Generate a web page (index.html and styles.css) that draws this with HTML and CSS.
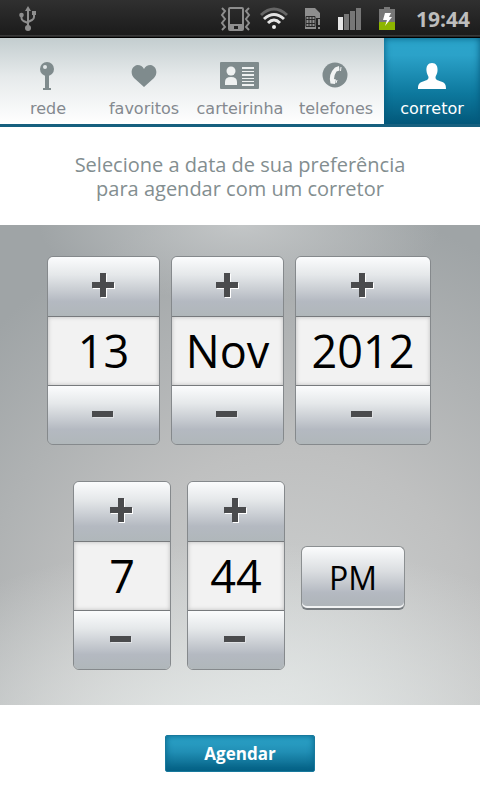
FILE: index.html
```html
<!DOCTYPE html>
<html lang="pt-BR">
<head>
<meta charset="utf-8">
<meta name="viewport" content="width=device-width, initial-scale=1">
<title>Corretor</title>
<link rel="stylesheet" href="styles.css">
</head>
<body>
<svg class="defs" aria-hidden="true">
  <symbol id="plus" viewBox="0 0 24 26">
    <path d="M9 1h6v9h8v6h-8v9H9v-9H1v-6h8z" fill="#fff"/>
    <path d="M8 0h6v9h8v6h-8v9H8v-9H0V9h8z" fill="#4a4b4d"/>
  </symbol>
  <symbol id="minus" viewBox="0 0 24 8">
    <path d="M1 1h21v6H1z" fill="#dfe1e4"/>
    <path d="M0 0h21v6H0z" fill="#4a4b4d"/>
  </symbol>
</svg>
<header class="status">
  <svg class="usb" width="18" height="26" viewBox="0 0 18 26" fill="none" stroke="#8e8e8e" stroke-width="2">
    <path d="M9 3v18M2.500 8v4q0 2 2 3l4.500 2M15 7v4q0 2-2 3l-4 2"/>
    <circle cx="9" cy="22" r="3" fill="#8e8e8e" stroke="none"/>
    <path d="M9 0l3 5H6zM13 5h4v4h-4z" fill="#8e8e8e" stroke="none"/>
    <circle cx="2.500" cy="9" r="2.300" fill="#8e8e8e" stroke="none"/>
  </svg>
  <div class="indicators">
    <svg width="32" height="24" viewBox="0 0 32 24" fill="none" stroke="#8e8e8e">
      <path fill="#8e8e8e" stroke="none" fill-rule="evenodd" d="M10 0h12q2 0 2 2v20q0 2-2 2H10q-2 0-2-2V2q0-2 2-2zM10 2v15h12V2zM14 19v3h4v-3z"/>
      <path stroke-width="2" d="M2 1l3 3-3 4 3 4-3 4 3 4-3 3M29 1l-3 3 3 4-3 4 3 4-3 4 3 3"/>
    </svg>
    <svg width="28" height="24" viewBox="0 0 28 24" fill="none" stroke-width="3">
      <path stroke="#666" d="M1 8q13-12 26 0"/>
      <path stroke="#e3e3e3" d="M4 12q10-9 20 0M8 16q6-6 12 0"/>
      <circle cx="14" cy="20" r="2" fill="#eee"/>
    </svg>
    <svg width="18" height="22" viewBox="0 0 18 22">
      <path fill="#8e8e8e" d="M1 0h10l5 5v5h-4v11H1z"/>
      <path fill="none" stroke="#292929" d="M2 8.500h9v10H2zM2 11.500h9M2 15.500h9M5 8.500v10M8 8.500v10"/>
      <path fill="#8e8e8e" d="M14 11h2v6h-2zM14 19h2v2h-2z"/>
    </svg>
    <svg width="24" height="22" viewBox="0 0 24 22">
      <path fill="#e6e6e6" d="M0 9h5v13H0z"/>
      <path fill="#777" d="M6 6h5v16H6zM12 3h5v19h-5zM18 0h5v22h-5z"/>
    </svg>
    <svg width="18" height="24" viewBox="0 0 18 24">
      <path fill="#777" d="M6 0h6v2h5v14H1V2h5z"/>
      <path fill="#8db500" d="M1 15h16v8H1z"/>
      <path fill="#fff" d="M7 6h6l-2 4h3l-7 9 2-6H5z"/>
    </svg>
    <time class="clock">19:44</time>
  </div>
</header>
<nav class="tabs">
  <a class="tab" href="#rede">
    <svg width="16" height="28" viewBox="0 0 16 28"><circle cx="7" cy="7" r="7" fill="#7f8b8d"/><circle cx="5" cy="5" r="2" fill="#e2e7e8"/><path d="M5 13h4v13h2v2H3v-2h2z" fill="#7f8b8d"/></svg>
    <span>rede</span>
  </a>
  <a class="tab" href="#favoritos">
    <svg width="26" height="25" viewBox="0 0 26 25"><path fill="#7f8b8d" d="M13 22L3 13C-1 9 0 1 6.500 0Q11 0 13 4 15 0 19.500 0C26 1 27 9 23 13z"/></svg>
    <span>favoritos</span>
  </a>
  <a class="tab" href="#carteirinha">
    <svg width="40" height="28" viewBox="0 0 40 28"><rect width="39" height="27" rx="1" fill="#7f8b8d"/><circle cx="11" cy="9" r="4.500" fill="#eef1f1"/><path fill="#eef1f1" d="M5 23v-3q0-5 6-5t6 5v3zM22 5h12v2H22zM22 9h12v1H22zM22 12h12v2H22zM22 16h12v1H22zM22 19h12v1H22zM22 22h12v2H22z"/></svg>
    <span>carteirinha</span>
  </a>
  <a class="tab" href="#telefones">
    <svg width="28" height="28" viewBox="0 0 28 28"><circle cx="13" cy="13" r="12.500" fill="#7f8b8d"/><path fill="#f2f4f4" d="M13 5.500l4-1.500.5 4.500-3 1q-2.500 3.500-2.500 7.500l2 .5-1 4.500-4.500-.5Q6 12 13 5.500z"/><path fill="none" stroke="#f2f4f4" d="M19 5l-.5 4M15 18l-1 3"/></svg>
    <span>telefones</span>
  </a>
  <a class="tab active" href="#corretor" aria-current="page">
    <svg width="30" height="27" viewBox="0 0 30 27"><path fill="#fff" d="M15 0c4 0 6 3 5.500 8-.3 3-1.500 4-2 6 0 3 1.500 3 5.500 4.500 4 1 5 3 5 7.500H1c0-4.500 1-6.500 5-7.500 4-1.500 5.500-1.500 5.500-4.500-.5-2-1.700-3-2-6C9 3 11 0 15 0z"/></svg>
    <span>corretor</span>
  </a>
</nav>
<main>
  <p class="prompt">Selecione a data de sua preferência<br>para agendar com um corretor</p>
  <form id="schedule" class="panel">
    <div class="row">
      <div class="stepper">
        <button type="button" aria-label="Aumentar dia"><svg width="24" height="26"><use href="#plus"/></svg></button>
        <input type="text" aria-label="Dia" value="13">
        <button type="button" aria-label="Diminuir dia"><svg width="24" height="8"><use href="#minus"/></svg></button>
      </div>
      <div class="stepper">
        <button type="button" aria-label="Próximo mês"><svg width="24" height="26"><use href="#plus"/></svg></button>
        <input type="text" aria-label="Mês" value="Nov">
        <button type="button" aria-label="Mês anterior"><svg width="24" height="8"><use href="#minus"/></svg></button>
      </div>
      <div class="stepper wide">
        <button type="button" aria-label="Aumentar ano"><svg width="24" height="26"><use href="#plus"/></svg></button>
        <input type="text" aria-label="Ano" value="2012">
        <button type="button" aria-label="Diminuir ano"><svg width="24" height="8"><use href="#minus"/></svg></button>
      </div>
    </div>
    <div class="row time">
      <div class="stepper narrow">
        <button type="button" aria-label="Aumentar hora"><svg width="24" height="26"><use href="#plus"/></svg></button>
        <input type="text" aria-label="Hora" value="7">
        <button type="button" aria-label="Diminuir hora"><svg width="24" height="8"><use href="#minus"/></svg></button>
      </div>
      <div class="stepper narrow">
        <button type="button" aria-label="Aumentar minutos"><svg width="24" height="26"><use href="#plus"/></svg></button>
        <input type="text" aria-label="Minutos" value="44">
        <button type="button" aria-label="Diminuir minutos"><svg width="24" height="8"><use href="#minus"/></svg></button>
      </div>
      <button class="period" type="button">PM</button>
    </div>
  </form>
  <div class="actions"><button class="submit" type="submit" form="schedule">Agendar</button></div>
</main>
</body>
</html>
```
FILE: styles.css
```css
* { box-sizing: border-box; }
body {
  margin: 0;
  background: #fff;
  font-family: "Open Sans", "Noto Sans", sans-serif;
}
button, input { font: inherit; margin: 0; padding: 0; }
svg { display: block; flex: none; }
.defs { position: absolute; width: 0; height: 0; }

.status {
  display: flex;
  align-items: center;
  justify-content: space-between;
  height: 38px;
  padding: 0 10px 0 19px;
  background: linear-gradient(#303030, #1b1b1b 35px, #555 36px, #000 37px);
}
.indicators { display: flex; align-items: center; gap: 16px; }
.indicators svg:first-child { margin-right: -8px; }
.clock {
  margin-left: 4px;
  color: #bdbdbd;
  font-size: 21px;
  font-weight: 700;
  line-height: 36px;
}

.tabs {
  display: grid;
  grid-template-columns: repeat(5, 1fr);
  height: 89px;
  border-bottom: 3px solid #17607f;
  background: linear-gradient(#c3cdcf, #e6eaeb 45%, #fff);
}
.tab {
  display: flex;
  flex-direction: column;
  align-items: center;
  justify-content: flex-end;
  gap: 9px;
  padding-bottom: 5px;
  color: #84898f;
  font: 16px/20px "DejaVu Sans", sans-serif;
  text-decoration: none;
}
.tab.active {
  color: #fff;
  background: linear-gradient(#2ba5cb, #2ba2c9 20%, #0d789d 65%, #03597b);
  box-shadow: inset 0 0 7px #05587b;
}

.prompt {
  margin: 0;
  padding: 26px 16px 24px;
  color: #838e90;
  font-size: 20px;
  line-height: 24px;
  text-align: center;
}

.panel {
  display: flex;
  flex-direction: column;
  gap: 36px;
  padding: 31px 2px 35px 0;
  background:
    radial-gradient(ellipse 85% 42% at 50% 108%, #e6eae9, rgba(230, 234, 233, 0)),
    radial-gradient(ellipse 42% 16% at 50% 0, #c3c6c7, rgba(195, 198, 199, 0)),
    radial-gradient(ellipse 90% 100% at 60% 95%, #d0d3d3, #bfc0c0 48%, #9fa4a6);
}
.row { display: flex; justify-content: center; gap: 11px; }
.row.time { gap: 16px; }
.stepper {
  display: flex;
  flex-direction: column;
  width: 113px;
  height: 189px;
  overflow: hidden;
  border: 1px solid #85898c;
  border-radius: 6px;
}
.stepper.wide { width: 136px; }
.stepper.narrow { width: 98px; }
.stepper button {
  display: flex;
  flex: 1;
  align-items: center;
  justify-content: center;
  border: 0;
  background: linear-gradient(#fbfcfd, #e5e8ea 30%, #b4b9c1 75%, #b0b7ba);
}
.stepper input {
  width: 100%;
  height: 70px;
  border: solid #777a7d;
  border-width: 1px 0;
  border-radius: 0;
  background: #f2f2f2;
  box-shadow: inset 0 0 4px #bbb;
  color: #000;
  font-size: 45px;
  text-align: center;
}
.period {
  align-self: center;
  width: 104px;
  height: 64px;
  margin-top: 4px;
  border: 1px solid #8b8f91;
  border-bottom: 2px solid #777c80;
  border-radius: 6px;
  background: linear-gradient(#fbfcfd, #dadde0 40%, #b4b9c1 75%, #aeb4b8);
  box-shadow: inset 0 -2px 0 #f2f3f4;
  color: #000;
  font-size: 32px;
}

.actions { display: flex; justify-content: center; padding: 30px 0 28px; }
.submit {
  width: 150px;
  height: 37px;
  border: 1px solid #18799d;
  border-radius: 2px;
  background: linear-gradient(#2da5ca, #218fb5 45%, #035f83);
  box-shadow: inset 0 0 6px #066389;
  color: #fff;
  font-size: 17px;
  font-weight: 700;
}
```
